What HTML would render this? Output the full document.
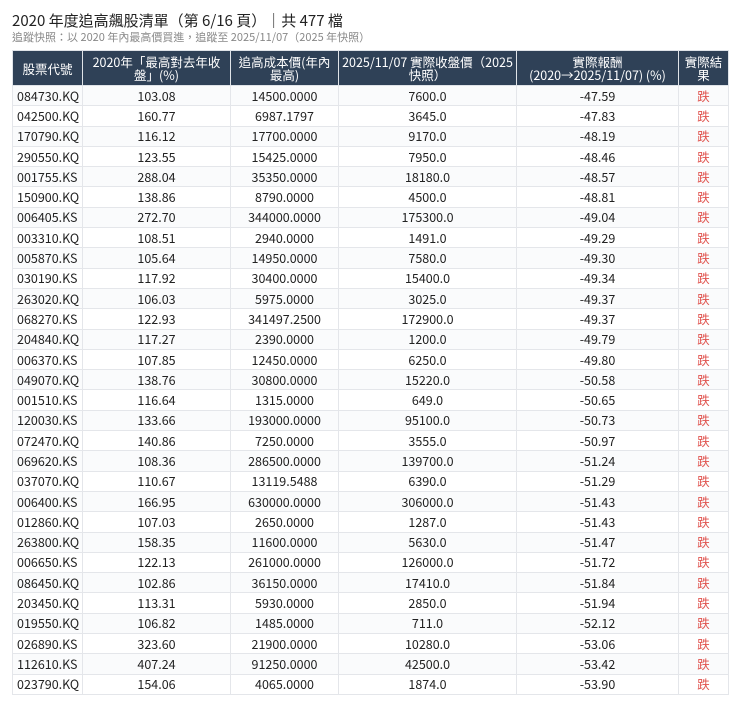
<!DOCTYPE html>
<html><head><meta charset="utf-8"><style>
body{margin:0;background:#fff;font-family:"Liberation Sans","Noto Sans CJK TC",sans-serif;color:#222}
.t{position:absolute;left:12px;top:10px;font-size:15px;color:#222;font-family:"Noto Sans CJK TC",sans-serif}
.s{position:absolute;left:12px;top:29px;font-size:11px;color:#888;font-family:"Noto Sans CJK TC",sans-serif}
table{position:absolute;left:12px;top:50px;width:716px;border-collapse:collapse;font-size:12.5px;font-family:"Noto Sans CJK TC",sans-serif;table-layout:fixed}
th{background:#2f4157;color:#fff;font-weight:normal;height:34px;line-height:13px;border:1px solid #dfe3e8;padding:0 6px;font-size:12.5px}
td{height:19.3px;padding:0 4px;border:1px solid #e4e6ea;text-align:center;line-height:18px;color:#222}
td:first-child{text-align:left}
tr:nth-child(even) td{background:#fafbfc}
td.r{color:#e0534e}
</style></head><body>
<div class="t">2020 年度追高飆股清單（第 6/16 頁）｜共 477 檔</div>
<div class="s">追蹤快照：以 2020 年內最高價買進，追蹤至 2025/11/07（2025 年快照）</div>
<table>
<colgroup><col style="width:70px"><col style="width:148px"><col style="width:108px"><col style="width:178px"><col style="width:162px"><col style="width:50px"></colgroup>
<tr><th style="padding:0 3px">股票代號</th><th>2020年「最高對去年收盤」(%)</th><th>追高成本價(年內最高)</th><th style="padding:0 2px">2025/11/07 實際收盤價（2025快照）</th><th style="padding:0 3px">實際報酬<br>(2020→2025/11/07) (%)</th><th style="padding:0 2px">實際結果</th></tr>
<tr><td>084730.KQ</td><td>103.08</td><td>14500.0000</td><td>7600.0</td><td>-47.59</td><td class="r">跌</td></tr>
<tr><td>042500.KQ</td><td>160.77</td><td>6987.1797</td><td>3645.0</td><td>-47.83</td><td class="r">跌</td></tr>
<tr><td>170790.KQ</td><td>116.12</td><td>17700.0000</td><td>9170.0</td><td>-48.19</td><td class="r">跌</td></tr>
<tr><td>290550.KQ</td><td>123.55</td><td>15425.0000</td><td>7950.0</td><td>-48.46</td><td class="r">跌</td></tr>
<tr><td>001755.KS</td><td>288.04</td><td>35350.0000</td><td>18180.0</td><td>-48.57</td><td class="r">跌</td></tr>
<tr><td>150900.KQ</td><td>138.86</td><td>8790.0000</td><td>4500.0</td><td>-48.81</td><td class="r">跌</td></tr>
<tr><td>006405.KS</td><td>272.70</td><td>344000.0000</td><td>175300.0</td><td>-49.04</td><td class="r">跌</td></tr>
<tr><td>003310.KQ</td><td>108.51</td><td>2940.0000</td><td>1491.0</td><td>-49.29</td><td class="r">跌</td></tr>
<tr><td>005870.KS</td><td>105.64</td><td>14950.0000</td><td>7580.0</td><td>-49.30</td><td class="r">跌</td></tr>
<tr><td>030190.KS</td><td>117.92</td><td>30400.0000</td><td>15400.0</td><td>-49.34</td><td class="r">跌</td></tr>
<tr><td>263020.KQ</td><td>106.03</td><td>5975.0000</td><td>3025.0</td><td>-49.37</td><td class="r">跌</td></tr>
<tr><td>068270.KS</td><td>122.93</td><td>341497.2500</td><td>172900.0</td><td>-49.37</td><td class="r">跌</td></tr>
<tr><td>204840.KQ</td><td>117.27</td><td>2390.0000</td><td>1200.0</td><td>-49.79</td><td class="r">跌</td></tr>
<tr><td>006370.KS</td><td>107.85</td><td>12450.0000</td><td>6250.0</td><td>-49.80</td><td class="r">跌</td></tr>
<tr><td>049070.KQ</td><td>138.76</td><td>30800.0000</td><td>15220.0</td><td>-50.58</td><td class="r">跌</td></tr>
<tr><td>001510.KS</td><td>116.64</td><td>1315.0000</td><td>649.0</td><td>-50.65</td><td class="r">跌</td></tr>
<tr><td>120030.KS</td><td>133.66</td><td>193000.0000</td><td>95100.0</td><td>-50.73</td><td class="r">跌</td></tr>
<tr><td>072470.KQ</td><td>140.86</td><td>7250.0000</td><td>3555.0</td><td>-50.97</td><td class="r">跌</td></tr>
<tr><td>069620.KS</td><td>108.36</td><td>286500.0000</td><td>139700.0</td><td>-51.24</td><td class="r">跌</td></tr>
<tr><td>037070.KQ</td><td>110.67</td><td>13119.5488</td><td>6390.0</td><td>-51.29</td><td class="r">跌</td></tr>
<tr><td>006400.KS</td><td>166.95</td><td>630000.0000</td><td>306000.0</td><td>-51.43</td><td class="r">跌</td></tr>
<tr><td>012860.KQ</td><td>107.03</td><td>2650.0000</td><td>1287.0</td><td>-51.43</td><td class="r">跌</td></tr>
<tr><td>263800.KQ</td><td>158.35</td><td>11600.0000</td><td>5630.0</td><td>-51.47</td><td class="r">跌</td></tr>
<tr><td>006650.KS</td><td>122.13</td><td>261000.0000</td><td>126000.0</td><td>-51.72</td><td class="r">跌</td></tr>
<tr><td>086450.KQ</td><td>102.86</td><td>36150.0000</td><td>17410.0</td><td>-51.84</td><td class="r">跌</td></tr>
<tr><td>203450.KQ</td><td>113.31</td><td>5930.0000</td><td>2850.0</td><td>-51.94</td><td class="r">跌</td></tr>
<tr><td>019550.KQ</td><td>106.82</td><td>1485.0000</td><td>711.0</td><td>-52.12</td><td class="r">跌</td></tr>
<tr><td>026890.KS</td><td>323.60</td><td>21900.0000</td><td>10280.0</td><td>-53.06</td><td class="r">跌</td></tr>
<tr><td>112610.KS</td><td>407.24</td><td>91250.0000</td><td>42500.0</td><td>-53.42</td><td class="r">跌</td></tr>
<tr><td>023790.KQ</td><td>154.06</td><td>4065.0000</td><td>1874.0</td><td>-53.90</td><td class="r">跌</td></tr>
</table>
</body></html>
